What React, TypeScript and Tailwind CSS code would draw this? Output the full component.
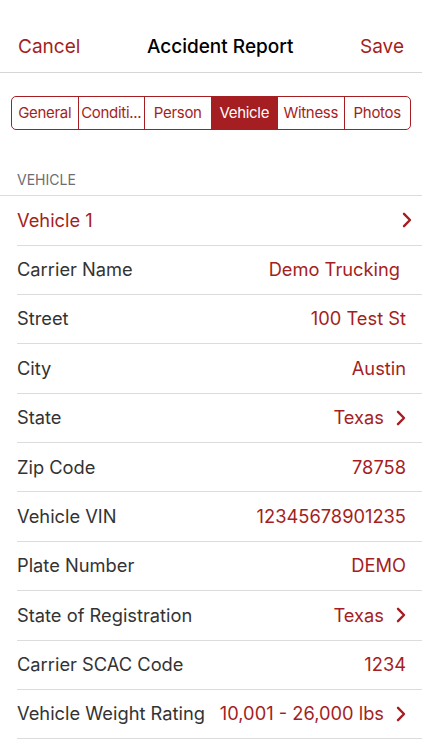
const tabs = ["General", "Conditi...", "Person", "Vehicle", "Witness", "Photos"];

const rows: { label: string; value: string; chevron?: boolean; inset?: boolean }[] = [
  { label: "Carrier Name", value: "Demo Trucking", inset: true },
  { label: "Street", value: "100 Test St" },
  { label: "City", value: "Austin" },
  { label: "State", value: "Texas", chevron: true },
  { label: "Zip Code", value: "78758" },
  { label: "Vehicle VIN", value: "12345678901235" },
  { label: "Plate Number", value: "DEMO" },
  { label: "State of Registration", value: "Texas", chevron: true },
  { label: "Carrier SCAC Code", value: "1234" },
  { label: "Vehicle Weight Rating", value: "10,001 - 26,000 lbs", chevron: true },
];

function Chevron({ className = "" }: { className?: string }) {
  return (
    <svg width="10" height="16" viewBox="0 0 10 16" className={className} fill="none">
      <path
        d="M2 1.8 L8 8 L2 14.2"
        stroke="#a51e22"
        strokeWidth="2.4"
        strokeLinecap="round"
        strokeLinejoin="round"
      />
    </svg>
  );
}

export default function App() {
  return (
    <div
      className="w-[422px] h-[750px] overflow-hidden bg-white text-[#333]"
      style={{ fontFamily: "Inter, 'Noto Sans', sans-serif" }}
    >
      {/* Nav bar */}
      <div className="h-[73px] pt-[22px] px-[18px] flex items-center justify-between border-b border-[#d6d6d6]">
        <span className="text-[19px] text-[#a51e22]">Cancel</span>
        <span className="text-[19px] font-medium text-black">Accident Report</span>
        <span className="text-[19px] text-[#a51e22]">Save</span>
      </div>

      {/* Segmented control */}
      <div className="px-[11px] pt-[23px]">
        <div className="flex h-[34px] rounded-[5px] border border-[#a51e22] overflow-hidden">
          {tabs.map((t, i) => (
            <div
              key={t}
              className={
                "flex-1 flex items-center justify-center text-[15px] tracking-[-0.3px] " +
                (i > 0 ? "border-l border-[#a51e22] " : "") +
                (t === "Vehicle" ? "bg-[#a51e22] text-white" : "text-[#a51e22]")
              }
            >
              {t}
            </div>
          ))}
        </div>
      </div>

      {/* Section header */}
      <div className="pt-[39px] pb-[5px] px-[17px] text-[14px] text-[#6d6d72]">VEHICLE</div>

      <div className="border-t border-[#dcdcdc]">
        <div className="ml-[17px] pr-[10px] h-[49.5px] flex items-center justify-between border-b border-[#dcdcdc]">
          <span className="text-[18.3px] text-[#a51e22]">Vehicle 1</span>
          <Chevron />
        </div>
        {rows.map((r) => (
          <div
            key={r.label}
            className="ml-[17px] pr-[16px] h-[49.4px] flex items-center justify-between border-b border-[#dcdcdc]"
          >
            <span className="text-[18.3px] text-[#333] whitespace-nowrap">{r.label}</span>
            <span
              className={
                "flex items-center text-[18.3px] text-[#a51e22] whitespace-nowrap " +
                (r.inset ? "mr-[6px]" : "")
              }
            >
              {r.value}
              {r.chevron && <Chevron className="ml-[12px]" />}
            </span>
          </div>
        ))}
      </div>
    </div>
  );
}
